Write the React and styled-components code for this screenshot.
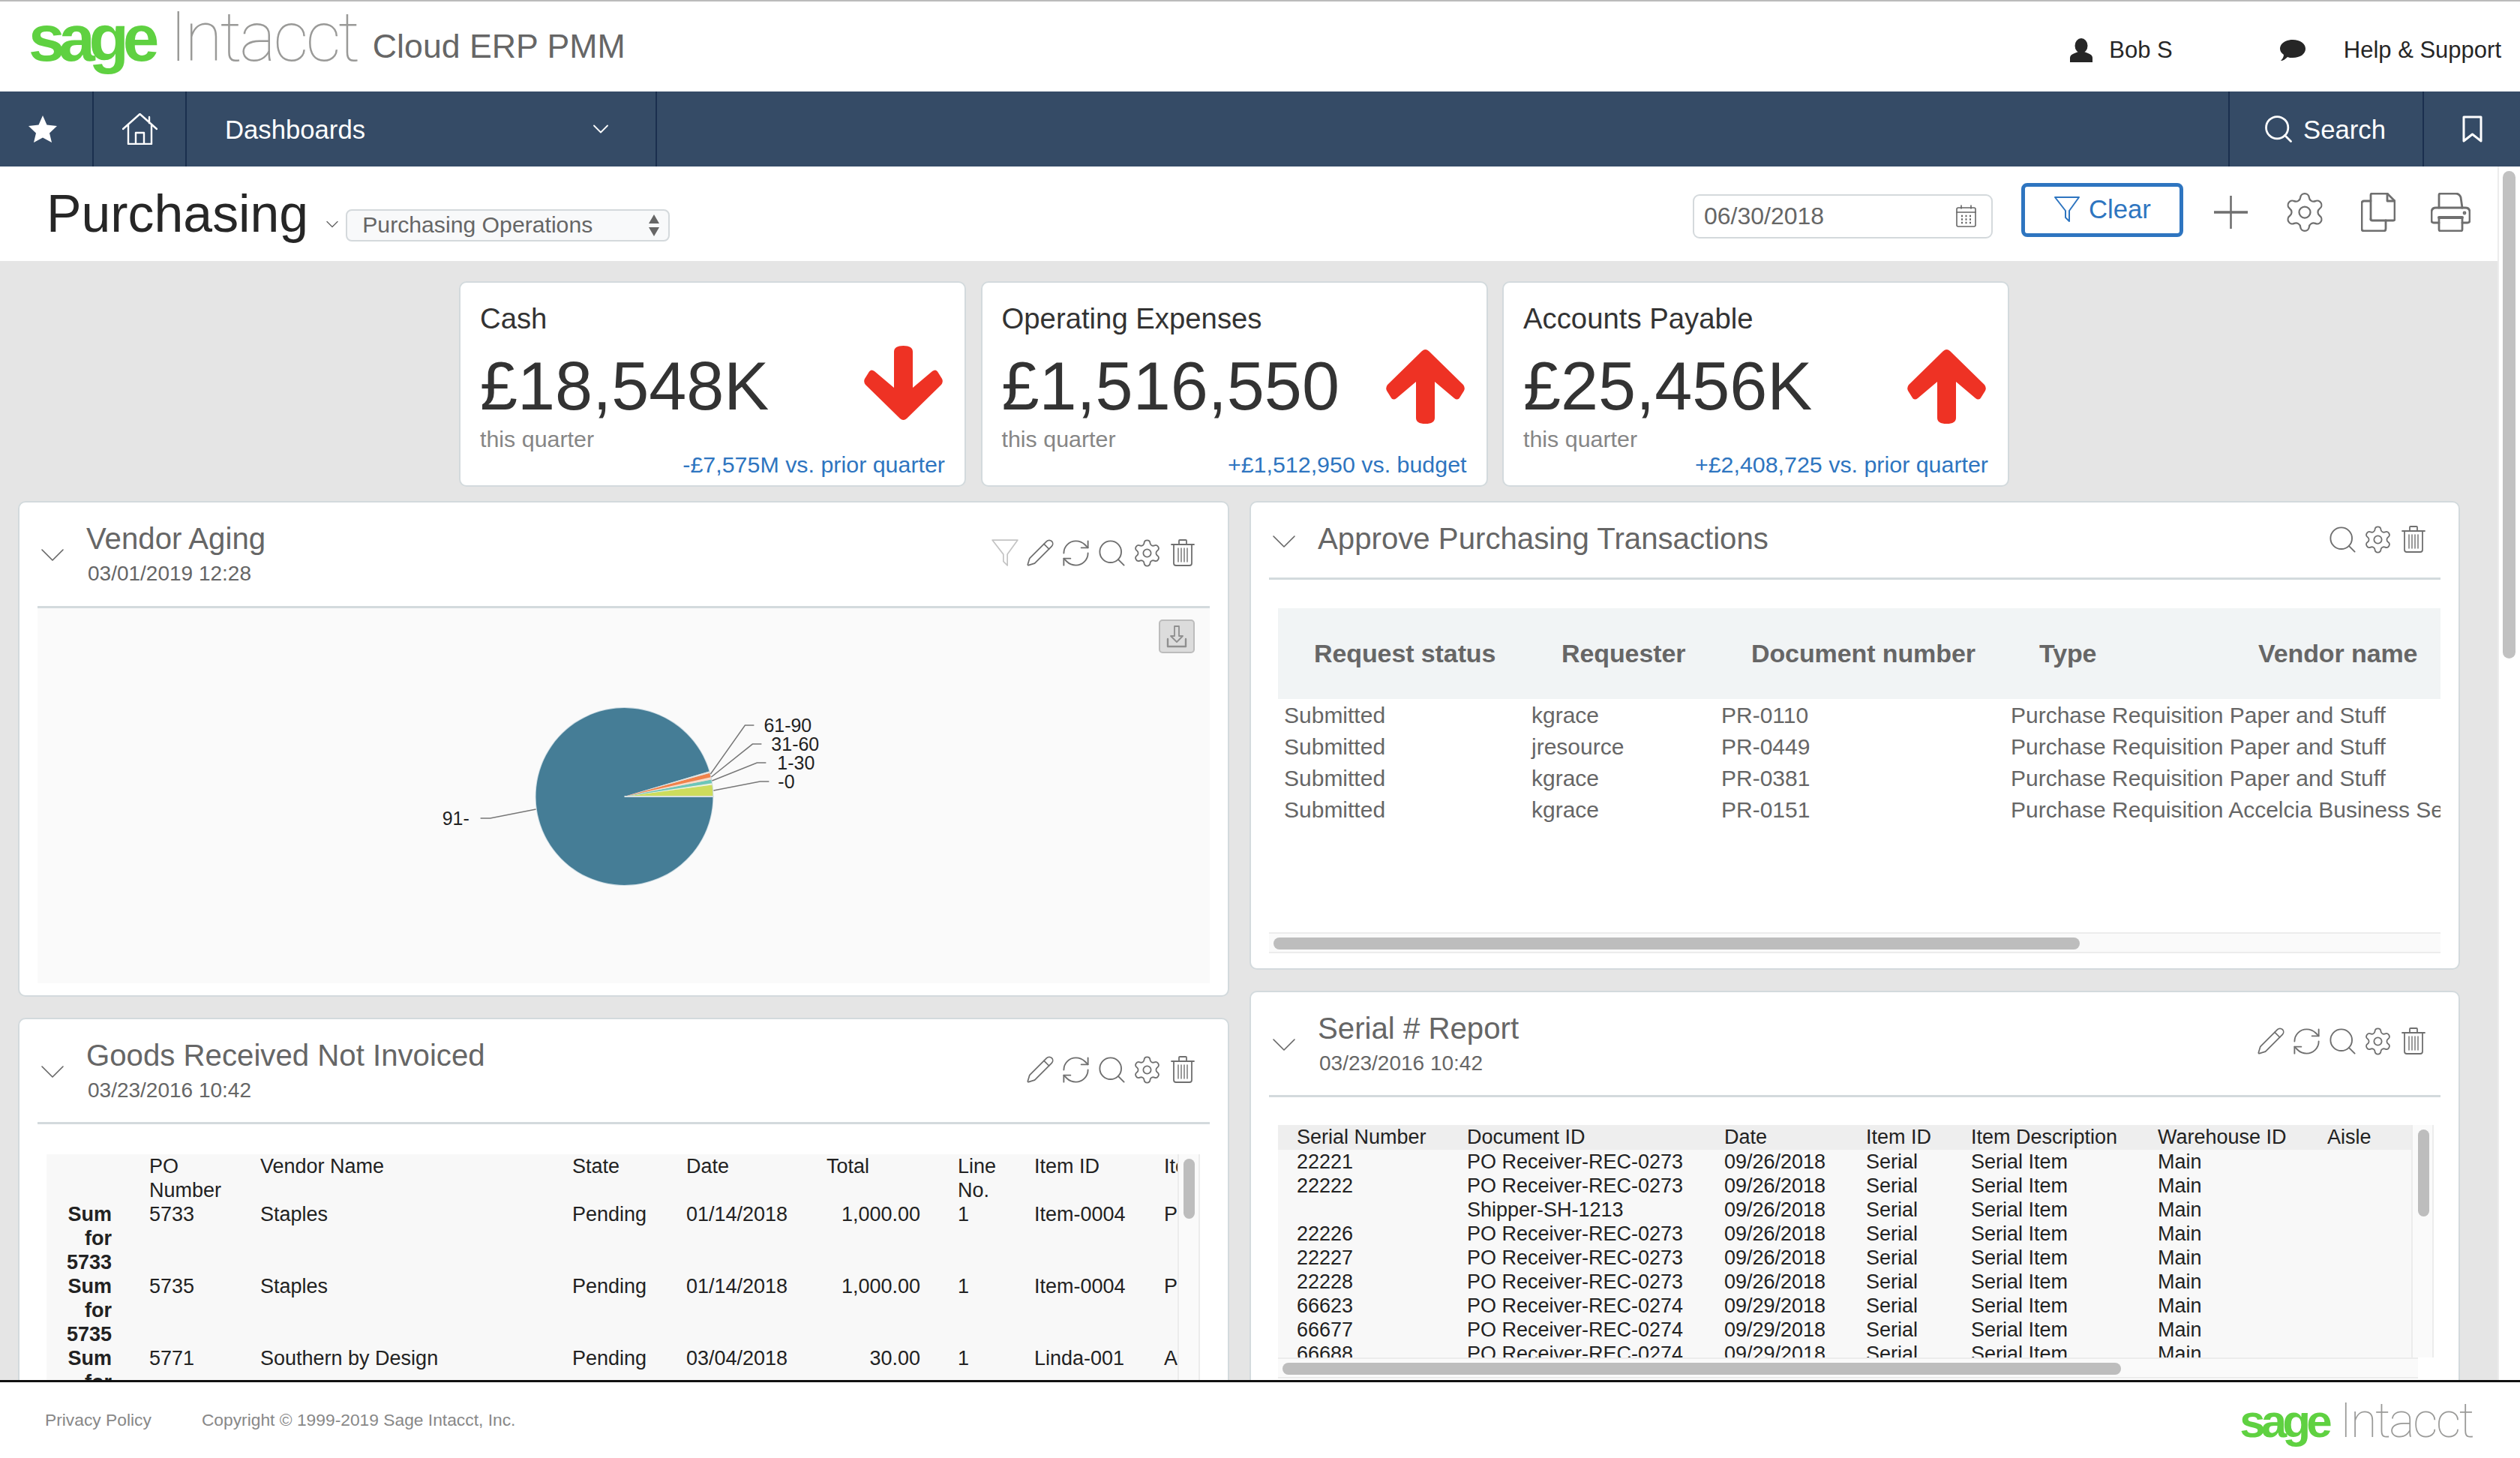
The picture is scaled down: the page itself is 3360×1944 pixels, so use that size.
import React from "react";
import styled, { createGlobalStyle } from "styled-components";
import { ChevronDown, Pencil, RefreshCw, Search, Settings } from "lucide-react";

const GlobalStyle = createGlobalStyle`
  html, body {
    margin: 0;
    padding: 0;
    height: 100%;
    overflow: hidden;
    background: #fff;
    font-family: "Liberation Sans", Arial, sans-serif;
  }
  * { box-sizing: border-box; }
`;

const Page = styled.div`
  width: 3360px;
  height: 1944px;
  display: flex;
  flex-direction: column;
  overflow: hidden;
`;

const TopBar = styled.header`
  height: 122px;
  flex: none;
  display: flex;
  align-items: center;
  border-top: 2px solid #bbb;
  padding: 0 25px 0 38px;
`;

const Brand = styled.div`
  display: flex;
  align-items: baseline;
  margin-bottom: 24px;
`;

const LogoWrap = styled.div`
  display: inline-flex;
  align-items: baseline;
  font-size: ${(p) => p.$size}px;
  line-height: 1.15;
  white-space: nowrap;
`;

const Sage = styled.span`
  color: #5fd141;
  font-size: 0.91em;
  font-weight: 700;
  letter-spacing: -0.095em;
  margin-right: 0.25em;
`;

const Intacct = styled.span`
  color: #9a9a98;
  font-family: Roboto, "Liberation Sans", sans-serif;
  font-size: 0.96em;
  font-weight: 100;
  letter-spacing: -0.037em;
`;

const ProductName = styled.span`
  margin-left: 20px;
  font-size: 44.7px;
  color: #666;
  position: relative;
  top: -4px;
`;

const TopRight = styled.div`
  margin-left: auto;
  margin-top: 9px;
  display: flex;
  align-items: center;
  font-size: 31px;
  color: #262626;
`;

const UserName = styled.span`
  margin: 0 143px 0 22px;
`;

const HelpText = styled.span`
  margin-left: 51px;
`;

const Nav = styled.nav`
  height: 100px;
  flex: none;
  display: flex;
  background: #354b66;
  color: #fff;
  font-size: 34.7px;
`;

const NavCell = styled.div`
  width: ${(p) => p.$w}px;
  flex: none;
  display: flex;
  align-items: center;
  justify-content: ${(p) => p.$justify || "center"};
  gap: ${(p) => p.$gap || 0}px;
  padding: ${(p) => p.$pad || "0"};
  border-right: ${(p) => (p.$noRight ? "none" : "2px solid #1b2f4e")};
  border-left: ${(p) => (p.$left ? "2px solid #1b2f4e" : "none")};
  margin-left: ${(p) => (p.$push ? "auto" : "0")};
`;

const NavLabel = styled.span`
  padding-top: 2px;
`;

const Body = styled.div`
  flex: 1;
  min-height: 0;
  display: flex;
`;

const Main = styled.div`
  flex: 1;
  min-width: 0;
  display: flex;
  flex-direction: column;
`;

const PageScroll = styled.div`
  width: 30px;
  flex: none;
  background: #fff;
  border-left: 2px solid #ececec;
  padding: 6px 6px 0 5px;
`;

const PageThumb = styled.div`
  height: 650px;
  border-radius: 9px;
  background: #c1c1c1;
`;

const TitleBar = styled.div`
  height: 126px;
  flex: none;
  display: flex;
  align-items: center;
  background: #fff;
  padding: 0 36px 0 62px;
`;

const PageTitle = styled.h1`
  margin: 2px 0 0;
  font-size: 69.8px;
  font-weight: 400;
  color: #262626;
  line-height: 1;
`;

const TitleChevron = styled.div`
  width: 48px;
  flex: none;
  margin-top: 28px;
  padding-left: 18px;
  color: #666;
  svg { display: block; }
`;

const ViewSelect = styled.div`
  width: 432px;
  height: 43px;
  margin: 30px 0 0 2px;
  display: flex;
  align-items: center;
  justify-content: space-between;
  padding: 0 12px 0 20px;
  font-size: 30.2px;
  color: #666;
  background: #f8f9fa;
  border: 2px solid #d4d9dc;
  border-radius: 8px;
`;

const DateField = styled.div`
  width: 400px;
  height: 59px;
  margin: 6px 38px 0 auto;
  display: flex;
  align-items: center;
  justify-content: space-between;
  padding: 0 20px 0 13px;
  font-size: 32px;
  color: #666;
  border: 2px solid #d4d9dc;
  border-radius: 9px;
`;

const ClearButton = styled.div`
  width: 216px;
  height: 72px;
  display: flex;
  align-items: center;
  gap: 12px;
  padding: 0 0 2px 39px;
  font-size: 34.7px;
  color: #2e75c0;
  border: 5px solid #2e75c0;
  border-radius: 8px;
  margin-top: -10px;
`;

const ToolIcons = styled.div`
  display: flex;
  align-items: center;
  gap: 45px;
  margin: -4px 0 0 40px;
  color: #6f6f6f;
  svg:last-child { margin-left: 2px; }
`;

const Content = styled.div`
  flex: 1;
  min-height: 0;
  overflow: hidden;
  background: #e5e5e5;
  padding: 27px 48px 0 24px;
`;

const KpiRow = styled.div`
  display: flex;
  gap: 19.5px;
  padding-left: 588px;
  margin-bottom: 19px;
`;

const KpiCard = styled.div`
  width: 676px;
  height: 274px;
  position: relative;
  background: #fff;
  border: 2px solid #d3dadd;
  border-radius: 10px;
  padding: 24px 24px 0 26px;
`;

const KpiLabel = styled.div`
  font-size: 38.3px;
  line-height: 48px;
  color: #333;
`;

const KpiMain = styled.div`
  display: flex;
  align-items: center;
  justify-content: space-between;
  height: 100px;
  margin-top: 16px;
  padding-right: 5px;
`;

const KpiValue = styled.div`
  font-size: 90px;
  line-height: 100px;
  color: #333;
`;

const KpiArrow = styled.svg`
  display: block;
  margin-top: ${(p) => (p.$up ? 0 : -8)}px;
  transform: rotate(${(p) => (p.$up ? 180 : 0)}deg);
`;

const KpiPeriod = styled.div`
  font-size: 30.4px;
  line-height: 40px;
  color: #868686;
`;

const KpiDelta = styled.div`
  font-size: 30.4px;
  line-height: 40px;
  color: #2e75c0;
  text-align: right;
  margin-top: -6px;
  padding-right: 2px;
`;

const Columns = styled.div`
  display: grid;
  grid-template-columns: 1615px 1614px;
  gap: 27px;
  align-items: start;
`;

const Column = styled.div`
  display: flex;
  flex-direction: column;
  gap: 28px;
`;

const Card = styled.section`
  height: ${(p) => p.$h}px;
  display: flex;
  flex-direction: column;
  background: #fff;
  border: 2px solid #d3dadd;
  border-radius: 10px;
  padding: 0 24px;
`;

const CardHead = styled.div`
  height: ${(p) => p.$h}px;
  flex: none;
  border-bottom: 3px solid #d3dadd;
  padding: 26px 18px 0 5px;
  display: flex;
  align-items: flex-start;
`;

const Chevron = styled.div`
  width: 60px;
  flex: none;
  color: #666;
  margin-top: ${(p) => p.$top}px;
  svg {
    display: block;
    margin-left: -13px;
  }
`;

const CardTitle = styled.h2`
  margin: 0;
  font-size: 40.2px;
  line-height: 46px;
  font-weight: 400;
  color: #666;
`;

const CardDate = styled.div`
  font-size: 28px;
  line-height: 46px;
  color: #666;
  padding-left: 2px;
`;

const CardTools = styled.div`
  margin-left: auto;
  margin-top: ${(p) => p.$top}px;
  display: flex;
  gap: 11.5px;
  color: #6f6f6f;
`;

const ToolSlot = styled.div`
  width: 36px;
  height: 38px;
  display: flex;
  align-items: center;
  justify-content: center;
  color: ${(p) => p.$color || "inherit"};
  svg { flex: none; }
`;

const ChartBox = styled.div`
  position: relative;
  height: 500px;
  background: #fafafa;
`;

const ChartSvg = styled.svg`
  display: block;
  width: 100%;
  height: 100%;
`;

const ExportButton = styled.div`
  position: absolute;
  top: 15px;
  right: 20px;
  width: 48px;
  height: 45px;
  display: flex;
  align-items: center;
  justify-content: center;
  background: #dcdcdc;
  border: 2px solid #bcbcbc;
  border-radius: 5px;
  color: #8f8f8f;
`;

const ApprovePanel = styled.div`
  flex: 1;
  min-height: 0;
  display: flex;
  flex-direction: column;
  padding-top: 38px;
`;

const Row = styled.div`
  display: grid;
  grid-template-columns: ${(p) => p.$cols};
  white-space: nowrap;
`;

const ApproveHead = styled(Row)`
  height: 121px;
  margin-left: 12px;
  align-items: center;
  background: #f1f4f5;
  font-size: 34px;
  font-weight: 700;
  color: #666;
  letter-spacing: -0.1px;
  padding-left: 48px;
  overflow: hidden;
`;

const ApproveRows = styled.div`
  margin: 1px 0 0 12px;
  overflow: hidden;
`;

const ApproveRow = styled(Row)`
  height: 42px;
  align-items: center;
  padding-left: 8px;
  font-size: 30px;
  color: #666;
`;

const HTrack = styled.div`
  margin-top: auto;
  margin-bottom: 20px;
  height: 28px;
  background: #fafafa;
  border-top: 2px solid #ececec;
  border-bottom: 2px solid #ececec;
  padding: 5px 0 0 6px;
`;

const HThumb = styled.div`
  width: ${(p) => p.$w}px;
  height: 16px;
  border-radius: 8px;
  background: #bdbdbd;
`;

const ReportPanel = styled.div`
  margin: ${(p) => p.$top}px 0 0 ${(p) => p.$left}px;
  width: ${(p) => p.$w}px;
  display: flex;
  height: ${(p) => p.$h}px;
  overflow: hidden;
  background: #f8f8f8;
  font-size: 27px;
  line-height: 32px;
  color: #222;
`;

const ReportTable = styled.div`
  flex: 1;
  min-width: 0;
  overflow: hidden;
`;

const VTrack = styled.div`
  width: ${(p) => p.$w}px;
  flex: none;
  background: #fafafa;
  border-left: 2px solid #ececec;
  border-right: 2px solid #ececec;
  padding: 6px 0 0 ${(p) => p.$pad}px;
`;

const VThumb = styled.div`
  width: 15px;
  height: ${(p) => p.$h}px;
  border-radius: 8px;
  background: #bdbdbd;
`;

const SumCell = styled.span`
  font-weight: 700;
  text-align: right;
  padding-right: 50px;
  color: #222;
`;

const AmountCell = styled.span`
  text-align: right;
  padding-right: 50px;
`;

const SerialHead = styled(Row)`
  background: #eee;
  height: 33px;
`;

const SerialCell = styled.span`
  padding-left: ${(p) => p.$pad || 0}px;
`;

const SerialScroll = styled(HTrack)`
  margin: 0 30px 0 12px;
`;

const Footer = styled.footer`
  height: 104px;
  flex: none;
  display: flex;
  align-items: center;
  gap: 67px;
  border-top: 3px solid #111;
  background: #fff;
  padding: 0 63px 0 60px;
  font-size: 22.8px;
  color: #888;
  z-index: 1;
`;

const FooterLogo = styled.div`
  margin-left: auto;
`;

function Logo({ size }) {
  return (
    <LogoWrap $size={size}>
      <Sage>sage</Sage>
      <Intacct>Intacct</Intacct>
    </LogoWrap>
  );
}

function Svg({ w, h, view, fill = "none", sw = 1.5, children }) {
  return (
    <svg width={w} height={h} viewBox={view} fill={fill} stroke={fill === "none" ? "currentColor" : "none"} strokeWidth={sw} strokeLinejoin="round" strokeLinecap="round">
      {children}
    </svg>
  );
}

const StarIcon = () => (
  <Svg w={38} h={36} view="0 0 38 36" fill="#fff">
    <path d="M19 0 L24.5 12.5 L38 14 L28 23.5 L31 36 L19 29.5 L7 36 L10 23.5 L0 14 L13.5 12.5 Z" />
  </Svg>
);

const HomeIcon = () => (
  <Svg w={47} h={42} view="0 0 47 42" sw={2.4}>
    <path d="M1 21 L23.5 1 L46 21 M8 16 V41 H39 V16 M18 41 V26 H29 V41 M36 13 V5" />
  </Svg>
);

const UserIcon = () => (
  <Svg w={30} h={32} view="0 0 30 32" fill="#262626">
    <ellipse cx="15" cy="10" rx="8.5" ry="10" />
    <path d="M0 32 V26 Q0 22 6 20 L11 18 H19 L24 20 Q30 22 30 26 V32 Z" />
  </Svg>
);

const ChatIcon = () => (
  <Svg w={34} h={28} view="0 0 34 28" fill="#262626">
    <path d="M17 0 C27 0 34 5 34 12 C34 19 27 24 17 24 C14 24 12 24 10 23 C7 26 4 28 1 28 C3 26 5 23 5 20 C2 18 0 15 0 12 C0 5 7 0 17 0 Z" />
  </Svg>
);

const BookmarkIcon = () => (
  <Svg w={27} h={36} view="0 0 27 36" sw={3}>
    <path d="M2 2 H25 V34 L13.5 25 L2 34 Z" />
  </Svg>
);

const SelectArrows = () => (
  <Svg w={14} h={29} view="0 0 14 29" fill="#666">
    <path d="M7 0 L14 12 H0 Z M0 17 H14 L7 29 Z" />
  </Svg>
);

const CalendarIcon = () => (
  <Svg w={27} h={30} view="0 0 27 30" sw={1.6}>
    <rect x="1" y="4" width="25" height="25" rx="2" />
    <path d="M1 10 H26 M7 1 V5 M20 1 V5" />
    <path d="M7 15 h2 M12.5 15 h2 M18 15 h2 M7 19.5 h2 M12.5 19.5 h2 M18 19.5 h2 M7 24 h2 M12.5 24 h2 M18 24 h2" strokeWidth="2.4" strokeLinecap="butt" />
  </Svg>
);

const FunnelIcon = ({ w = 34, h = 34, sw = 2 }) => (
  <Svg w={w} h={h} view="0 0 34 34" sw={sw}>
    <path d="M1 1 H33 L20 19 V33 L15 28 V19 Z" />
  </Svg>
);

const PlusIcon = () => (
  <Svg w={47} h={46} view="0 0 47 46" sw={2.6}>
    <path d="M23.5 1 V45" strokeLinecap="butt" />
    <path d="M1 23 H46" strokeWidth="3.4" strokeLinecap="butt" />
  </Svg>
);

const CopyIcon = () => (
  <Svg w={46} h={52} view="0 0 46 52" sw={2.8}>
    <path d="M13 36 V3 Q13 1 15 1 H35 L45 11 V35 Q45 37 43 37 H33" />
    <path d="M35 1 V11 H45" />
    <path d="M13 11 H4 Q1 11 1 14 V48 Q1 51 4 51 H30 Q33 51 33 48 V37 H15 Q13 37 13 35" />
  </Svg>
);

const PrintIcon = () => (
  <Svg w={53} h={52} view="0 0 53 52" sw={2.8}>
    <path d="M11 20 V3 Q11 1 13 1 H33 Q38 1 40 6 L42 20" />
    <path d="M11 40 H4 Q1 40 1 37 V26 Q1 20 7 20 H46 Q52 20 52 26 V37 Q52 40 49 40 H42" />
    <rect x="11" y="33" width="31" height="18" rx="2" />
    <path d="M11 33 H42" strokeWidth="4" />
    <circle cx="45" cy="27" r="1" />
  </Svg>
);

const TrashIcon = () => (
  <Svg w={32} h={36} view="0 0 32 36" sw={1.8}>
    <path d="M1 7 H31 M11 6 V2 Q11 1 12 1 H20 Q21 1 21 2 V6" />
    <path d="M4 7 V32 Q4 35 7 35 H25 Q28 35 28 32 V7" />
    <path d="M10 12 V30 M14 12 V30 M18 12 V30 M22 12 V30" strokeWidth="1.4" />
  </Svg>
);

const DownloadIcon = () => (
  <Svg w={28} h={30} view="0 0 28 30" sw={1.8}>
    <path d="M11 1 H17 V14 H22 L14 22 L6 14 H11 Z" />
    <path d="M2 18 V28 H26 V18" strokeWidth="2.4" />
  </Svg>
);

function ArrowIcon({ up }) {
  return (
    <KpiArrow $up={up} width="105" height="100" viewBox="0 0 105 100">
      <path
        fill="#ee3224"
        d="M40 8 Q40 0 52.5 0 T65 8 V56 L91 34 Q96 30 99 36 L104 44 Q106 48 103 52 L57 97 Q52.5 101 48 97 L2 52 Q-1 48 1 44 L6 36 Q9 30 14 34 L40 56 Z"
      />
    </KpiArrow>
  );
}

const slicePath = (r, a0, a1) => {
  const toXY = (a) => [r * Math.cos((a * Math.PI) / 180), -r * Math.sin((a * Math.PI) / 180)];
  const [x0, y0] = toXY(a0);
  const [x1, y1] = toXY(a1);
  const large = a1 - a0 > 180 ? 1 : 0;
  return `M0 0 L${x0} ${y0} A${r} ${r} 0 ${large} 0 ${x1} ${y1} Z`;
};

const slices = [
  { from: 16.5, to: 360, color: "#457d96" },
  { from: 0, to: 7.5, color: "#cddc5c" },
  { from: 7.5, to: 8.6, color: "#eef3d8" },
  { from: 8.6, to: 11, color: "#6dc6b8" },
  { from: 11, to: 12.6, color: "#fbdcc8" },
  { from: 12.6, to: 15.4, color: "#f2824a" },
  { from: 15.4, to: 16.5, color: "#e3e3df" },
];

const pieLabels = [
  { text: "61-90", line: "M898 221 L944 156 H956", x: 969, y: 156 },
  { text: "31-60", line: "M899 225 L954 181 H966", x: 979, y: 181 },
  { text: "1-30", line: "M900 230 L960 206 H972", x: 987, y: 206 },
  { text: "-0", line: "M902 243 L964 231 H976", x: 988, y: 231 },
  { text: "91-", line: "M665 268 L604 280 H591", x: 540, y: 280 },
];

function PieChart() {
  return (
    <ChartSvg viewBox="0 0 1564 500">
      <g transform="translate(783 251)">
        <circle r="119" fill="#c9dae2" />
        {slices.map((s) => (
          <path key={s.from} d={slicePath(118, s.from, s.to)} fill={s.color} />
        ))}
        <path d="M0 0 H119" stroke="#d5dfe0" strokeWidth="2" />
      </g>
      {pieLabels.map((l) => (
        <g key={l.text}>
          <path d={l.line} fill="none" stroke="#777" strokeWidth="1.5" />
          <text x={l.x} y={l.y + 9} fontSize="25" fill="#222" fontFamily="Liberation Sans, sans-serif">
            {l.text}
          </text>
        </g>
      ))}
    </ChartSvg>
  );
}

function Tools({ filter, edit, top }) {
  return (
    <CardTools $top={top}>
      {filter && (
        <ToolSlot $color="#c4c4c4">
          <FunnelIcon w={36} h={36} sw={1.6} />
        </ToolSlot>
      )}
      {edit && (
        <ToolSlot>
          <Pencil size={40} strokeWidth={1.05} />
        </ToolSlot>
      )}
      {edit && (
        <ToolSlot>
          <RefreshCw size={43} strokeWidth={1.05} />
        </ToolSlot>
      )}
      <ToolSlot>
        <Search size={43} strokeWidth={1.05} />
      </ToolSlot>
      <ToolSlot>
        <Settings size={41} strokeWidth={1.05} />
      </ToolSlot>
      <ToolSlot>
        <TrashIcon />
      </ToolSlot>
    </CardTools>
  );
}

function PanelHead({ title, date, chevTop, filter, edit, h, toolsTop }) {
  return (
    <CardHead $h={h}>
      <Chevron $top={chevTop}>
        <ChevronDown size={56} strokeWidth={0.7} />
      </Chevron>
      <div>
        <CardTitle>{title}</CardTitle>
        {date && <CardDate>{date}</CardDate>}
      </div>
      <Tools filter={filter} edit={edit} top={toolsTop} />
    </CardHead>
  );
}

const kpis = [
  { label: "Cash", value: "£18,548K", delta: "-£7,575M vs. prior quarter" },
  { label: "Operating Expenses", value: "£1,516,550", delta: "+£1,512,950 vs. budget", up: true },
  { label: "Accounts Payable", value: "£25,456K", delta: "+£2,408,725 vs. prior quarter", up: true },
];

const approveRows = [
  ["Submitted", "kgrace", "PR-0110", "Purchase Requisition Paper and Stuff"],
  ["Submitted", "jresource", "PR-0449", "Purchase Requisition Paper and Stuff"],
  ["Submitted", "kgrace", "PR-0381", "Purchase Requisition Paper and Stuff"],
  ["Submitted", "kgrace", "PR-0151", "Purchase Requisition Accelcia Business Services"],
];

const goodsCols = "137px 148px 416px 152px 187px 175px 102px 173px 200px";

const goodsRows = [
  { po: "5733", vendor: "Staples", date: "01/14/2018", total: "1,000.00", item: "Item-0004", desc: "P" },
  { po: "5735", vendor: "Staples", date: "01/14/2018", total: "1,000.00", item: "Item-0004", desc: "P" },
  { po: "5771", vendor: "Southern by Design", date: "03/04/2018", total: "30.00", item: "Linda-001", desc: "A" },
];

const serialCols = "252px 343px 189px 140px 249px 226px 110px";

const serialRows = [
  ["22221", "PO Receiver-REC-0273", "09/26/2018"],
  ["22222", "PO Receiver-REC-0273", "09/26/2018"],
  ["", "Shipper-SH-1213", "09/26/2018"],
  ["22226", "PO Receiver-REC-0273", "09/26/2018"],
  ["22227", "PO Receiver-REC-0273", "09/26/2018"],
  ["22228", "PO Receiver-REC-0273", "09/26/2018"],
  ["66623", "PO Receiver-REC-0274", "09/29/2018"],
  ["66677", "PO Receiver-REC-0274", "09/29/2018"],
  ["66688", "PO Receiver-REC-0274", "09/29/2018"],
];

export default function App() {
  return (
    <Page>
      <GlobalStyle />
      <TopBar>
        <Brand>
          <Logo size={96} />
          <ProductName>Cloud ERP PMM</ProductName>
        </Brand>
        <TopRight>
          <UserIcon />
          <UserName>Bob S</UserName>
          <ChatIcon />
          <HelpText>Help &amp; Support</HelpText>
        </TopRight>
      </TopBar>

      <Nav>
        <NavCell $w={125} $pad="0 10px 0 0">
          <StarIcon />
        </NavCell>
        <NavCell $w={124}>
          <HomeIcon />
        </NavCell>
        <NavCell $w={627} $justify="space-between" $pad="0 55px 0 51px">
          <NavLabel>Dashboards</NavLabel>
          <ChevronDown size={36} strokeWidth={1.2} />
        </NavCell>
        <NavCell $w={261} $push $left $gap={11} $pad="0 6px 0 0">
          <Search size={44} strokeWidth={1.5} />
          <NavLabel>Search</NavLabel>
        </NavCell>
        <NavCell $w={128} $noRight>
          <BookmarkIcon />
        </NavCell>
      </Nav>

      <Body>
        <Main>
          <TitleBar>
            <PageTitle>Purchasing</PageTitle>
            <TitleChevron>
              <ChevronDown size={28} strokeWidth={1.2} />
            </TitleChevron>
            <ViewSelect>
              Purchasing Operations
              <SelectArrows />
            </ViewSelect>
            <DateField>
              06/30/2018
              <CalendarIcon />
            </DateField>
            <ClearButton>
              <FunnelIcon />
              Clear
            </ClearButton>
            <ToolIcons>
              <PlusIcon />
              <Settings size={60} strokeWidth={0.9} />
              <CopyIcon />
              <PrintIcon />
            </ToolIcons>
          </TitleBar>

          <Content>
            <KpiRow>
              {kpis.map((k) => (
                <KpiCard key={k.label}>
                  <KpiLabel>{k.label}</KpiLabel>
                  <KpiMain>
                    <KpiValue>{k.value}</KpiValue>
                    <ArrowIcon up={k.up} />
                  </KpiMain>
                  <KpiPeriod>this quarter</KpiPeriod>
                  <KpiDelta>{k.delta}</KpiDelta>
                </KpiCard>
              ))}
            </KpiRow>

            <Columns>
              <Column>
                <Card $h={661}>
                  <PanelHead title="Vendor Aging" date="03/01/2019 12:28" chevTop={16} filter edit h={141} toolsTop={22} />
                  <ChartBox>
                    <PieChart />
                    <ExportButton>
                      <DownloadIcon />
                    </ExportButton>
                  </ChartBox>
                </Card>
                <Card $h={800}>
                  <PanelHead title="Goods Received Not Invoiced" date="03/23/2016 10:42" chevTop={16} edit h={140} toolsTop={22} />
                  <ReportPanel $top={40} $left={12} $w={1538} $h={600}>
                    <ReportTable>
                      <Row $cols={goodsCols}>
                        <span />
                        <span>PO<br />Number</span>
                        <span>Vendor Name</span>
                        <span>State</span>
                        <span>Date</span>
                        <span>Total</span>
                        <span>Line<br />No.</span>
                        <span>Item ID</span>
                        <span>Item Description</span>
                      </Row>
                      {goodsRows.map((r) => (
                        <Row $cols={goodsCols} key={r.po}>
                          <SumCell>Sum<br />for<br />{r.po}</SumCell>
                          <span>{r.po}</span>
                          <span>{r.vendor}</span>
                          <span>Pending</span>
                          <span>{r.date}</span>
                          <AmountCell>{r.total}</AmountCell>
                          <span>1</span>
                          <span>{r.item}</span>
                          <span>{r.desc}</span>
                        </Row>
                      ))}
                    </ReportTable>
                    <VTrack $w={30} $pad={6}>
                      <VThumb $h={80} />
                    </VTrack>
                  </ReportPanel>
                </Card>
              </Column>

              <Column>
                <Card $h={625}>
                  <PanelHead title="Approve Purchasing Transactions" chevTop={-2} h={103} toolsTop={4} />
                  <ApprovePanel>
                    <ApproveHead $cols="330px 253px 384px 292px 240px">
                      <span>Request status</span>
                      <span>Requester</span>
                      <span>Document number</span>
                      <span>Type</span>
                      <span>Vendor name</span>
                    </ApproveHead>
                    <ApproveRows>
                      {approveRows.map((r) => (
                        <ApproveRow $cols="330px 253px 386px 1fr" key={r[2]}>
                          {r.map((c) => (
                            <span key={c}>{c}</span>
                          ))}
                        </ApproveRow>
                      ))}
                    </ApproveRows>
                    <HTrack>
                      <HThumb $w={1075} />
                    </HTrack>
                  </ApprovePanel>
                </Card>
                <Card $h={800}>
                  <PanelHead title="Serial # Report" date="03/23/2016 10:42" chevTop={16} edit h={140} toolsTop={20} />
                  <ReportPanel $top={37} $left={12} $w={1541} $h={310}>
                    <ReportTable>
                      <SerialHead $cols={serialCols}>
                        <SerialCell $pad={25}>Serial Number</SerialCell>
                        <span>Document ID</span>
                        <span>Date</span>
                        <span>Item ID</span>
                        <span>Item Description</span>
                        <span>Warehouse ID</span>
                        <span>Aisle</span>
                      </SerialHead>
                      {serialRows.map((r) => (
                        <Row $cols={serialCols} key={r[0] + r[1]}>
                          <SerialCell $pad={25}>{r[0]}</SerialCell>
                          <span>{r[1]}</span>
                          <span>{r[2]}</span>
                          <span>Serial</span>
                          <span>Serial Item</span>
                          <span>Main</span>
                          <span />
                        </Row>
                      ))}
                    </ReportTable>
                    <VTrack $w={30} $pad={7}>
                      <VThumb $h={116} />
                    </VTrack>
                  </ReportPanel>
                  <SerialScroll>
                    <HThumb $w={1118} />
                  </SerialScroll>
                </Card>
              </Column>
            </Columns>
          </Content>
        </Main>
        <PageScroll>
          <PageThumb />
        </PageScroll>
      </Body>

      <Footer>
        <span>Privacy Policy</span>
        <span>Copyright © 1999-2019 Sage Intacct, Inc.</span>
        <FooterLogo>
          <Logo size={68} />
        </FooterLogo>
      </Footer>
    </Page>
  );
}
